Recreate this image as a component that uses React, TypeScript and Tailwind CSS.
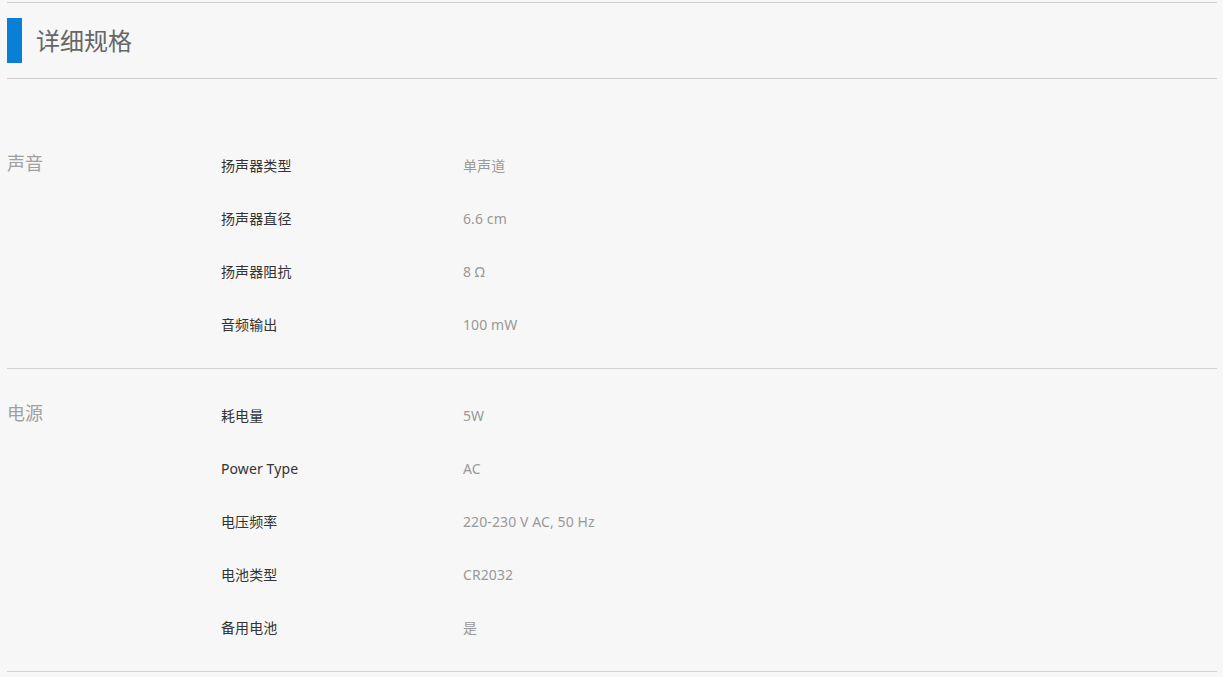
import React from 'react';

type Spec = { label: string; value: string };
type Group = { name: string; items: Spec[] };

const groups: Group[] = [
  {
    name: '声音',
    items: [
      { label: '扬声器类型', value: '单声道' },
      { label: '扬声器直径', value: '6.6 cm' },
      { label: '扬声器阻抗', value: '8 Ω' },
      { label: '音频输出', value: '100 mW' },
    ],
  },
  {
    name: '电源',
    items: [
      { label: '耗电量', value: '5W' },
      { label: 'Power Type', value: 'AC' },
      { label: '电压频率', value: '220-230 V AC, 50 Hz' },
      { label: '电池类型', value: 'CR2032' },
      { label: '备用电池', value: '是' },
    ],
  },
];

const App: React.FC = () => {
  return (
    <div className="min-h-screen bg-[#f7f7f7] pt-[2px] pl-[7px] pr-[6px] font-['Noto_Sans','Noto_Sans_CJK_SC',sans-serif]">
      <div className="border-t border-[#cfcfcf]">
        <div className="flex items-center h-[76px] border-b border-[#cfcfcf]">
          <div className="w-[15px] h-[45px] bg-[#0a7fd6]" />
          <h2 className="ml-[14px] text-[24px] leading-none text-[#666]">详细规格</h2>
        </div>

        {groups.map((group, i) => (
          <section
            key={group.name}
            className={`flex border-b border-[#d3d3d3] pb-[17px] ${i === 0 ? 'pt-[60px]' : 'pt-[20px]'}`}
          >
            <div className="w-[214px] shrink-0 pt-[12px] text-[18px] leading-[24px] text-[#a0a0a0]">
              {group.name}
            </div>
            <div className="flex-1">
              {group.items.map((item) => (
                <div key={item.label} className="flex items-center h-[53px] text-[14px] tracking-[0.1px]">
                  <div className="w-[242px] shrink-0 text-[#333]">{item.label}</div>
                  <div className="text-[#999]">{item.value}</div>
                </div>
              ))}
            </div>
          </section>
        ))}
      </div>
    </div>
  );
};

export default App;
